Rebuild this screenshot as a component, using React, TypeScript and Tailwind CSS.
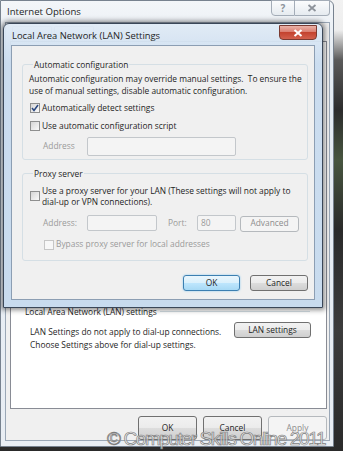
import React from "react";

function Checkbox({ checked = false, disabled = false }: { checked?: boolean; disabled?: boolean }) {
  return (
    <span
      className={`flex h-[10px] w-[10px] shrink-0 items-center justify-center border ${
        disabled
          ? "border-[#c6c6c6] bg-[#f7f7f7]"
          : "border-[#8e8f8f] bg-[linear-gradient(135deg,#d6d6d6,#fafafa)]"
      }`}
    >
      {checked && (
        <svg width="8" height="8" viewBox="0 0 8 8">
          <path d="M1 4 L3 6.5 L7 1" fill="none" stroke="#27457e" strokeWidth="1.5" />
        </svg>
      )}
    </span>
  );
}

function Btn({
  children,
  w,
  h = "h-[16px]",
  kind = "normal",
}: {
  children: React.ReactNode;
  w: string;
  h?: string;
  kind?: "normal" | "default" | "disabled";
}) {
  const cls =
    kind === "default"
      ? "border-[#3c7fb1] bg-[linear-gradient(to_bottom,#eaf6fd,#d9f0fc_50%,#bee6fd_50%,#a7d9f5)] text-[#1e1e1e] shadow-[0_0_2px_#7ec4f0]"
      : kind === "disabled"
      ? "border-[#b5b9bd] bg-[#f4f4f4] text-[#8d8d8d]"
      : "border-[#707070] bg-[linear-gradient(to_bottom,#f2f2f2,#ebebeb_50%,#dddddd_50%,#cfcfcf)] text-[#1e1e1e]";
  return (
    <div className={`flex ${w} ${h} shrink-0 items-center justify-center rounded-[3px] border ${cls}`}>
      {children}
    </div>
  );
}

export default function App() {
  return (
    <div className="relative h-[451px] w-[343px] overflow-hidden bg-[linear-gradient(to_bottom,#f2f2f2_0px,#eeeeee_30px,#5a5a5a_60px,#2c2c2c_110px,#47553f_160px,#2a2a2a_230px,#3c3c3c_330px,#2a2a2a_451px)] font-['Open_Sans',sans-serif] text-[8.4px] text-[#1e1e1e]">
      {/* Outer window: Internet Options */}
      <div className="absolute left-0 top-0 flex h-[447px] w-[334px] flex-col rounded-tr-[6px] border border-[#77828f] bg-[linear-gradient(to_bottom,#f3f6f9,#e4ebf2_60px,#e9eef4)] pb-[5px] pl-[4px] pr-[3px]">
        <div className="flex h-[21px] items-start justify-between">
          <span className="pl-[2px] pt-[4px] text-[9.6px] leading-[13px] text-[#1e1e1e]">Internet Options</span>
          <div className="-mt-px flex">
            <div className="flex h-[16px] w-[24px] items-center justify-center rounded-bl-[4px] border border-[#a4adb8] bg-[linear-gradient(to_bottom,#fbfcfd,#e6ebf0)] text-[10px] font-bold text-[#8d939b]">
              ?
            </div>
            <div className="flex h-[16px] w-[35px] items-center justify-center rounded-br-[4px] border border-l-0 border-[#a4adb8] bg-[linear-gradient(to_bottom,#fbfcfd,#e6ebf0)]">
              <svg width="10" height="8" viewBox="0 0 10 8">
                <path d="M1.5 1 L8.5 7 M8.5 1 L1.5 7" stroke="#8d939b" strokeWidth="1.8" />
              </svg>
            </div>
          </div>
        </div>
        <div className="flex flex-1 flex-col border border-[#9aa7b6] bg-[#f0f0f0]">
          {/* tab strip (hidden behind the dialog) */}
          <div className="flex h-[18px] items-end gap-[2px] pl-[6px]">
            <div className="h-[15px] w-[40px] rounded-t-[2px] border border-b-0 border-[#b8bec6] bg-[#f6f6f6]" />
            <div className="h-[15px] w-[40px] rounded-t-[2px] border border-b-0 border-[#b8bec6] bg-[#f6f6f6]" />
          </div>
          <div className="ml-[4px] mr-[2px] flex flex-1 flex-col justify-end border border-[#898c95] bg-white pb-[57px]">
            <div className="flex items-center pl-[14px] pr-[16px]">
              <span className="leading-[11px]">Local Area Network (LAN) settings</span>
              <div className="ml-[3px] h-px flex-1 bg-[#d5dfe5]" />
            </div>
            <div className="mt-[5px] flex items-start justify-between pl-[19px] pr-[15px]">
              <p className="mt-[3px] leading-[13px]">
                LAN Settings do not apply to dial-up connections.
                <br />
                Choose Settings above for dial-up settings.
              </p>
              <Btn w="w-[77px]">LAN settings</Btn>
            </div>
          </div>
          <div className="flex h-[31px] items-start justify-end gap-[6px] pr-[2px] pt-[7px]">
            <Btn w="w-[59px]" h="h-[24px]">OK</Btn>
            <Btn w="w-[59px]" h="h-[24px]">Cancel</Btn>
            <Btn w="w-[59px]" h="h-[24px]" kind="disabled">Apply</Btn>
          </div>
        </div>
      </div>

      {/* LAN Settings dialog */}
      <div className="absolute left-[3px] top-[23px] flex h-[285px] w-[320px] flex-col rounded-t-[6px] border border-[#3a4758] bg-[linear-gradient(to_bottom,rgba(224,235,246,0.93),rgba(202,220,239,0.97)_40px,#c8dbee)] px-[7px] pb-[7px] shadow-[0_0_5px_2px_rgba(0,0,0,0.45)]">
        <div className="flex h-[21px] items-start justify-between">
          <span className="pl-[1px] pt-[5px] text-[9.4px] leading-[13px] text-[#1e1e1e]">
            Local Area Network (LAN) Settings
          </span>
          <div className="-mr-[2px] mt-px flex h-[15px] w-[38px] items-center justify-center rounded-b-[4px] border border-[#7a3a31] bg-[linear-gradient(to_bottom,#eab3a8,#d9786a_50%,#c4432f_50%,#d2604d)]">
            <svg width="10" height="8" viewBox="0 0 10 8">
              <path d="M1.5 1 L8.5 7 M8.5 1 L1.5 7" stroke="#ffffff" strokeWidth="2" />
            </svg>
          </div>
        </div>
        <div className="flex flex-1 flex-col border border-[#8c9eb3] bg-[#f0f0f0] pl-[10px] pr-[6px] pt-[13px]">
          <fieldset className="rounded-[3px] border border-[#d5dfe5] pb-[3px] pl-[6px] pr-[4px] pt-[3px]">
            <legend className="ml-[4px] px-[1px] leading-[11px]">Automatic configuration</legend>
            <p className="leading-[11.5px]">
              Automatic configuration may override manual settings.&nbsp; To ensure the
              <br />
              use of manual settings, disable automatic configuration.
            </p>
            <div className="mt-[6px] flex h-[12px] items-center gap-[2px] pl-[1px]">
              <Checkbox checked />
              <span>Automatically detect settings</span>
            </div>
            <div className="mt-[6px] flex h-[12px] items-center gap-[2px] pl-[1px]">
              <Checkbox />
              <span>Use automatic configuration script</span>
            </div>
            <div className="mt-[5px] flex h-[19px] items-center">
              <span className="w-[58px] shrink-0 pl-[14px] text-[#9a9a9a]">Address</span>
              <div className="h-[19px] w-[149px] rounded-[2px] border border-[#c3c7cb] bg-[#f4f4f4]" />
            </div>
          </fieldset>
          <fieldset className="mt-[8px] rounded-[3px] border border-[#d5dfe5] pb-[10px] pl-[6px] pr-[4px] pt-[7px]">
            <legend className="ml-[4px] px-[1px] leading-[11px]">Proxy server</legend>
            <div className="flex items-start gap-[2px] pl-[1px]">
              <span className="mt-[5px]">
                <Checkbox />
              </span>
              <p className="leading-[10.5px]">
                Use a proxy server for your LAN (These settings will not apply to
                <br />
                dial-up or VPN connections).
              </p>
            </div>
            <div className="mt-[8px] flex h-[16px] items-center text-[#9a9a9a]">
              <span className="w-[58px] shrink-0 pl-[14px]">Address:</span>
              <div className="h-[16px] w-[70px] rounded-[2px] border border-[#c3c7cb] bg-[#f4f4f4]" />
              <span className="w-[40px] shrink-0 pl-[11px]">Port:</span>
              <div className="flex h-[16px] w-[39px] items-center rounded-[2px] border border-[#c3c7cb] bg-[#f4f4f4] pl-[3px]">
                80
              </div>
              <div className="ml-[4px] mt-px">
                <Btn w="w-[59px]" kind="disabled">Advanced</Btn>
              </div>
            </div>
            <div className="mt-[8px] flex h-[11px] items-center gap-[2px] pl-[15px] text-[#9a9a9a]">
              <Checkbox disabled />
              <span>Bypass proxy server for local addresses</span>
            </div>
          </fieldset>
          <div className="mt-[14px] flex justify-end gap-[10px]">
            <Btn w="w-[57px]" kind="default">OK</Btn>
            <Btn w="w-[58px]">Cancel</Btn>
          </div>
        </div>
      </div>

      {/* watermark */}
      <div className="absolute left-[107px] top-[429px] whitespace-nowrap font-['Liberation_Sans',Arial,sans-serif] text-[19px] leading-none tracking-[-1.4px] text-[rgba(245,245,245,0.75)] [-webkit-text-stroke:0.7px_#7d7d7d]">
        © Computer Skills Online 2011
      </div>
    </div>
  );
}
